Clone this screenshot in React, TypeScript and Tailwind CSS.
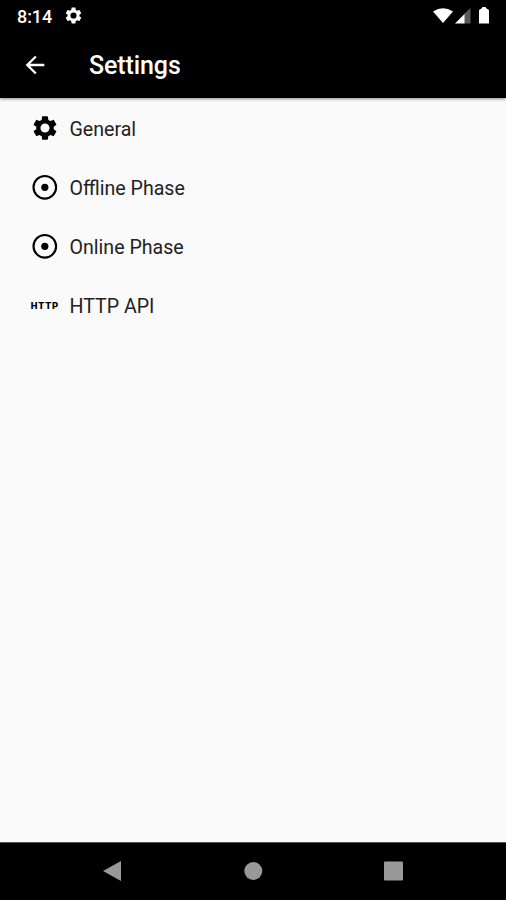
import React from "react";

const GEAR =
  "M19.43 12.98c.04-.32.07-.64.07-.98s-.03-.66-.07-.98l2.11-1.65c.19-.15.24-.42.12-.64l-2-3.46c-.12-.22-.39-.3-.61-.22l-2.49 1c-.52-.4-1.08-.73-1.69-.98l-.38-2.65C14.46 2.18 14.25 2 14 2h-4c-.25 0-.46.18-.49.42l-.38 2.65c-.61.25-1.17.59-1.69.98l-2.49-1c-.23-.09-.49 0-.61.22l-2 3.46c-.13.22-.07.49.12.64l2.11 1.65c-.04.32-.07.65-.07.98s.03.66.07.98l-2.11 1.65c-.19.15-.24.42-.12.64l2 3.46c.12.22.39.3.61.22l2.49-1c.52.4 1.08.73 1.69.98l.38 2.65c.03.24.24.42.49.42h4c.25 0 .46-.18.49-.42l.38-2.65c.61-.25 1.17-.59 1.69-.98l2.49 1c.23.09.49 0 .61-.22l2-3.46c.12-.22.07-.49-.12-.64l-2.11-1.65zM12 15.9a3.9 3.9 0 1 1 0-7.8 3.9 3.9 0 0 1 0 7.8z";

function Gear({ className }: { className: string }) {
  return (
    <svg viewBox="0 0 24 24" className={className} fill="currentColor" fillRule="evenodd">
      <path d={GEAR} />
    </svg>
  );
}

function Target() {
  return (
    <svg viewBox="0 0 30 30" className="size-[30px]">
      <circle cx="14.8" cy="14.3" r="11.3" fill="none" stroke="currentColor" strokeWidth="2.1" />
      <circle cx="14.8" cy="14.3" r="3.6" fill="currentColor" />
    </svg>
  );
}

function Row({ icon, label }: { icon: React.ReactNode; label: string }) {
  return (
    <li className="flex h-[59px] items-center pl-[29px]">
      <span className="flex w-8 shrink-0 justify-center">{icon}</span>
      <span className="ml-2 pl-[0.5px] pt-0.5 text-[19.6px] leading-[30px] text-[#222]">{label}</span>
    </li>
  );
}

export default function App() {
  return (
    <div className="flex h-[900px] w-[506px] flex-col overflow-hidden bg-[#fafafa] font-['Roboto',sans-serif]">
      <header className="h-[98px] shrink-0 bg-black text-white shadow-[0_1px_3px_rgba(0,0,0,0.45)]">
        <div className="flex h-8 items-center pl-[17px] pr-[15px]">
          <span className="text-[18px] font-medium tracking-[-0.1px]">8:14</span>
          <Gear className="ml-3 mb-px size-[19px]" />
          <svg viewBox="0 0 60 20" className="ml-auto h-5 w-[60px]" fill="white">
            <path d="M2 5.5Q12-1 22 5.5L12 17Z" />
            <path d="M39.5 2V17.5H33V8Z" opacity=".35" />
            <path d="M33.5 8V17.5H24Z" />
            <path d="M48 4L50.5 2.5L51.5 1H54.5L55.5 2.5L58 4V17.5H48Z" />
          </svg>
        </div>
        <div className="flex h-[66px] items-center pl-[21px]">
          <svg viewBox="0 0 24 24" className="size-7" fill="white">
            <path d="M20 11H7.83l5.59-5.59L12 4l-8 8 8 8 1.41-1.41L7.83 13H20z" />
          </svg>
          <h1 className="ml-10 pt-0.5 text-[25px] font-medium tracking-[-0.1px]">Settings</h1>
        </div>
      </header>
      <ul className="flex-1 pt-px text-black">
        <Row icon={<Gear className="mb-0.5 size-7" />} label="General" />
        <Row icon={<Target />} label="Offline Phase" />
        <Row icon={<Target />} label="Online Phase" />
        <Row
          icon={<span className="pt-px text-[9.5px] font-black leading-none tracking-[0.9px]">HTTP</span>}
          label="HTTP API"
        />
      </ul>
      <nav className="flex h-[58px] shrink-0 items-center justify-center gap-[121px] border-t border-[#555] bg-black pb-0.5 text-[#999]">
        <svg viewBox="0 0 20 20" className="size-5" fill="currentColor"><path d="M19 0V20L1 10Z" /></svg>
        <svg viewBox="0 0 20 20" className="size-5" fill="currentColor"><circle cx="10.3" cy="10" r="9" /></svg>
        <svg viewBox="0 0 20 20" className="size-5" fill="currentColor"><rect y=".5" width="19" height="19" rx="1" /></svg>
      </nav>
    </div>
  );
}
